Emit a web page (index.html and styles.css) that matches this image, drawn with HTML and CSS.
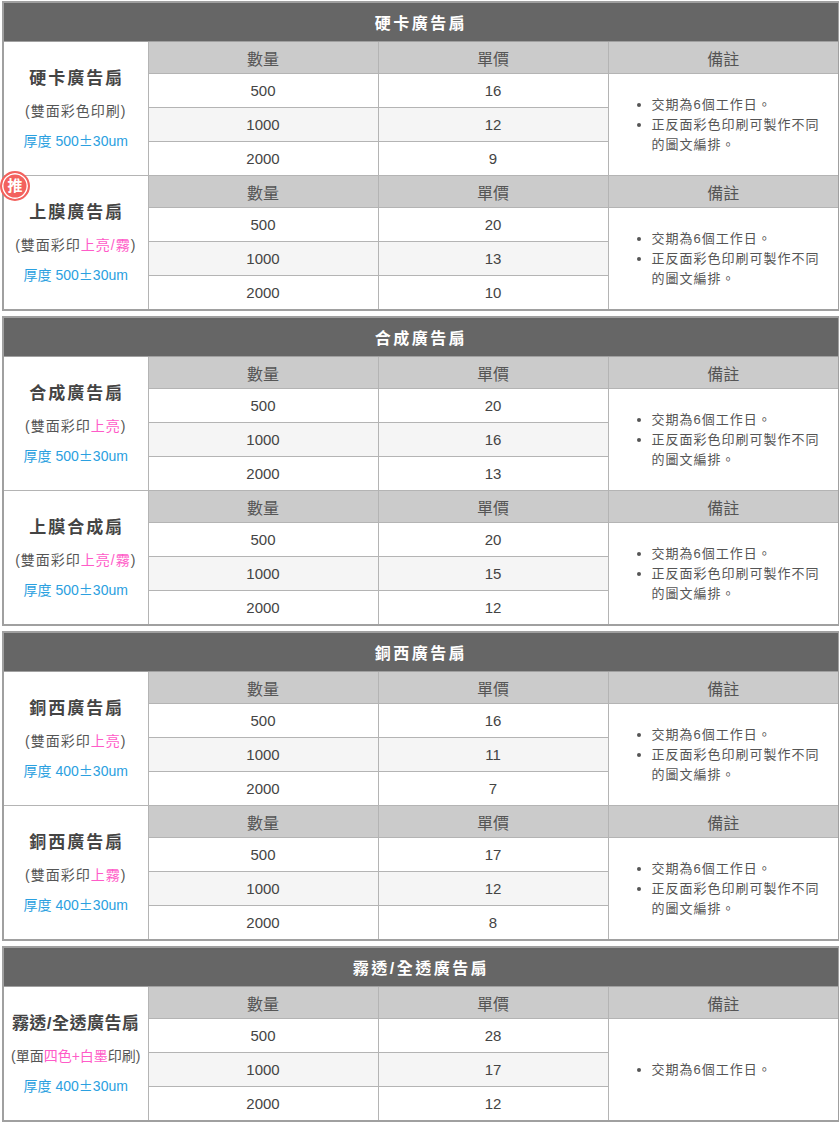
FILE: index.html
```html
<!DOCTYPE html>
<html lang="zh-Hant">
<head>
<meta charset="utf-8">
<title>廣告扇價目表</title>
<link rel="stylesheet" href="styles.css">
</head>
<body>
<div class="page">

<table class="price">
  <colgroup><col class="c-prod"><col class="c-qty"><col class="c-price"><col class="c-note"></colgroup>
  <tr><th colspan="4" class="title">硬卡廣告扇</th></tr>
  <tr class="head">
    <td rowspan="4" class="prod">
      <div class="name">硬卡廣告扇</div>
      <div class="desc">(雙面彩色印刷)</div>
      <div class="thick">厚度 500<span class="pm">±</span>30um</div>
    </td>
    <th>數量</th><th>單價</th><th>備註</th>
  </tr>
  <tr><td>500</td><td>16</td>
    <td rowspan="3" class="notes"><ul><li>交期為6個工作日。</li><li>正反面彩色印刷可製作不同的圖文編排。</li></ul></td></tr>
  <tr class="alt"><td>1000</td><td>12</td></tr>
  <tr><td>2000</td><td>9</td></tr>
  <tr class="head">
    <td rowspan="4" class="prod rec">
      <span class="badge">推</span>
      <div class="name">上膜廣告扇</div>
      <div class="desc">(雙面彩印<span class="pink">上亮/霧</span>)</div>
      <div class="thick">厚度 500<span class="pm">±</span>30um</div>
    </td>
    <th>數量</th><th>單價</th><th>備註</th>
  </tr>
  <tr><td>500</td><td>20</td>
    <td rowspan="3" class="notes"><ul><li>交期為6個工作日。</li><li>正反面彩色印刷可製作不同的圖文編排。</li></ul></td></tr>
  <tr class="alt"><td>1000</td><td>13</td></tr>
  <tr><td>2000</td><td>10</td></tr>
</table>

<table class="price">
  <colgroup><col class="c-prod"><col class="c-qty"><col class="c-price"><col class="c-note"></colgroup>
  <tr><th colspan="4" class="title">合成廣告扇</th></tr>
  <tr class="head">
    <td rowspan="4" class="prod">
      <div class="name">合成廣告扇</div>
      <div class="desc">(雙面彩印<span class="pink">上亮</span>)</div>
      <div class="thick">厚度 500<span class="pm">±</span>30um</div>
    </td>
    <th>數量</th><th>單價</th><th>備註</th>
  </tr>
  <tr><td>500</td><td>20</td>
    <td rowspan="3" class="notes"><ul><li>交期為6個工作日。</li><li>正反面彩色印刷可製作不同的圖文編排。</li></ul></td></tr>
  <tr class="alt"><td>1000</td><td>16</td></tr>
  <tr><td>2000</td><td>13</td></tr>
  <tr class="head">
    <td rowspan="4" class="prod">
      <div class="name">上膜合成扇</div>
      <div class="desc">(雙面彩印<span class="pink">上亮/霧</span>)</div>
      <div class="thick">厚度 500<span class="pm">±</span>30um</div>
    </td>
    <th>數量</th><th>單價</th><th>備註</th>
  </tr>
  <tr><td>500</td><td>20</td>
    <td rowspan="3" class="notes"><ul><li>交期為6個工作日。</li><li>正反面彩色印刷可製作不同的圖文編排。</li></ul></td></tr>
  <tr class="alt"><td>1000</td><td>15</td></tr>
  <tr><td>2000</td><td>12</td></tr>
</table>

<table class="price">
  <colgroup><col class="c-prod"><col class="c-qty"><col class="c-price"><col class="c-note"></colgroup>
  <tr><th colspan="4" class="title">銅西廣告扇</th></tr>
  <tr class="head">
    <td rowspan="4" class="prod">
      <div class="name">銅西廣告扇</div>
      <div class="desc">(雙面彩印<span class="pink">上亮</span>)</div>
      <div class="thick">厚度 400<span class="pm">±</span>30um</div>
    </td>
    <th>數量</th><th>單價</th><th>備註</th>
  </tr>
  <tr><td>500</td><td>16</td>
    <td rowspan="3" class="notes"><ul><li>交期為6個工作日。</li><li>正反面彩色印刷可製作不同的圖文編排。</li></ul></td></tr>
  <tr class="alt"><td>1000</td><td>11</td></tr>
  <tr><td>2000</td><td>7</td></tr>
  <tr class="head">
    <td rowspan="4" class="prod">
      <div class="name">銅西廣告扇</div>
      <div class="desc">(雙面彩印<span class="pink">上霧</span>)</div>
      <div class="thick">厚度 400<span class="pm">±</span>30um</div>
    </td>
    <th>數量</th><th>單價</th><th>備註</th>
  </tr>
  <tr><td>500</td><td>17</td>
    <td rowspan="3" class="notes"><ul><li>交期為6個工作日。</li><li>正反面彩色印刷可製作不同的圖文編排。</li></ul></td></tr>
  <tr class="alt"><td>1000</td><td>12</td></tr>
  <tr><td>2000</td><td>8</td></tr>
</table>

<table class="price">
  <colgroup><col class="c-prod"><col class="c-qty"><col class="c-price"><col class="c-note"></colgroup>
  <tr><th colspan="4" class="title">霧透/全透廣告扇</th></tr>
  <tr class="head">
    <td rowspan="4" class="prod">
      <div class="name narrow">霧透/全透廣告扇</div>
      <div class="desc narrow">(單面<span class="pink">四色+白墨</span>印刷)</div>
      <div class="thick">厚度 400<span class="pm">±</span>30um</div>
    </td>
    <th>數量</th><th>單價</th><th>備註</th>
  </tr>
  <tr><td>500</td><td>28</td>
    <td rowspan="3" class="notes"><ul><li>交期為6個工作日。</li></ul></td></tr>
  <tr class="alt"><td>1000</td><td>17</td></tr>
  <tr><td>2000</td><td>12</td></tr>
</table>

</div>
</body>
</html>
```

FILE: styles.css
```css
html, body {
  margin: 0;
  padding: 0;
  background: #fff;
}

body {
  font-family: "Liberation Sans", "Noto Sans CJK TC", sans-serif;
  color: #444;
}

.page {
  padding: 1px 1px 0 2px;
}

.price {
  width: 836px;
  border-collapse: collapse;
  border: 2px solid #a0a0a0;
  margin-bottom: 5px;
  table-layout: fixed;
}

.c-prod { width: 145px; }
.c-qty { width: 230px; }
.c-price { width: 230px; }
.c-note { width: 231px; }

.price td,
.price th {
  border: 1px solid #b4b4b4;
  padding: 0;
  text-align: center;
  vertical-align: middle;
  font-weight: normal;
}

.price th.title {
  background: #666;
  color: #fff;
  font-size: 16px;
  font-weight: bold;
  letter-spacing: 2.5px;
  height: 38px;
  border-color: #a0a0a0;
}

.head th {
  background: #cbcbcb;
  color: #555;
  font-size: 16px;
  height: 31px;
}

.price tr td {
  height: 33px;
  font-size: 15px;
  color: #444;
}

.price tr.alt td {
  background: #f5f5f5;
}

.price td.prod {
  background: #fff;
  line-height: 1;
}

.price td.prod.rec {
  position: relative;
}

.price td.notes {
  background: #fff;
  text-align: left;
  font-size: 13px;
  color: #555;
  letter-spacing: 1px;
  padding: 0 6px 0 43px;
}

.notes ul {
  margin: 0;
  padding: 0;
  list-style: disc outside;
  line-height: 20px;
}

.name {
  font-size: 17px;
  font-weight: bold;
  letter-spacing: 2px;
  color: #444;
  padding-left: 2px;
}

.name.narrow {
  letter-spacing: 0.5px;
  padding-left: 0;
}

.desc {
  font-size: 14px;
  color: #555;
  letter-spacing: 1px;
  margin-top: 17px;
}

.desc.narrow {
  letter-spacing: 0;
}

.thick {
  font-size: 14px;
  color: #2aa0e0;
  margin-top: 15px;
}

.pm {
  font-family: "Noto Sans CJK TC", sans-serif;
}

.pink {
  color: #ff5bc8;
}

.badge {
  position: absolute;
  top: -5px;
  left: -4px;
  width: 26px;
  height: 26px;
  border-radius: 50%;
  background: #f3625e;
  border: 2px solid #f3625e;
  box-shadow: inset 0 0 0 1.5px #fff;
  color: #fff;
  font-size: 15px;
  font-weight: bold;
  line-height: 26px;
  text-align: center;
}
```
